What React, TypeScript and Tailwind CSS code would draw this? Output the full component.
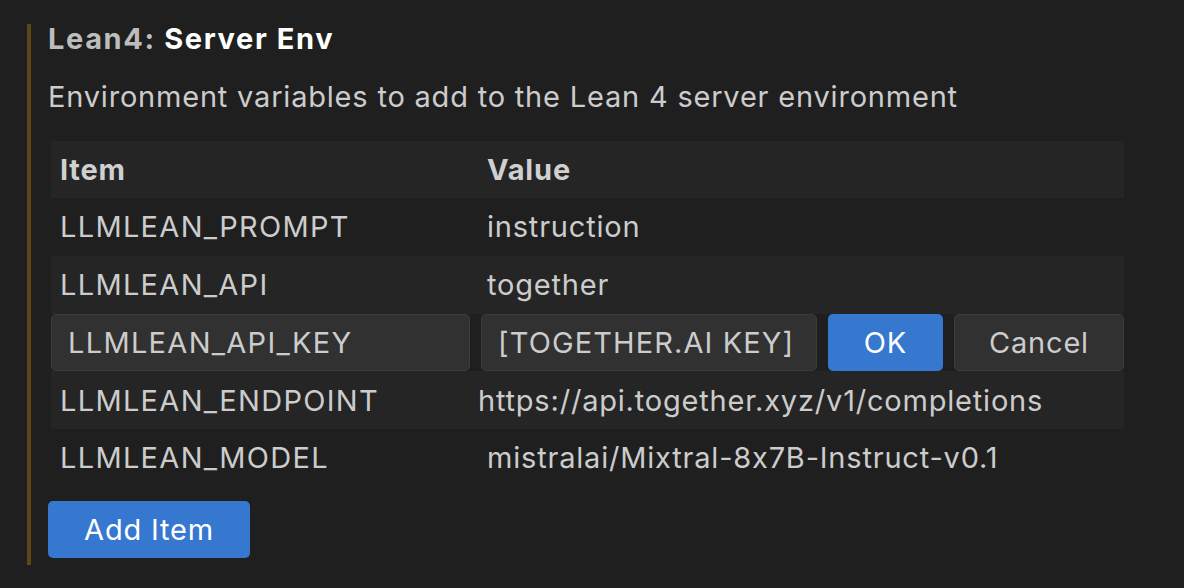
import { useState } from 'react';

type EnvRow = {
  item: string;
  value: string;
  valueShift?: boolean;
};

const ROWS: EnvRow[] = [
  { item: 'LLMLEAN_PROMPT', value: 'instruction' },
  { item: 'LLMLEAN_API', value: 'together' },
  { item: 'LLMLEAN_API_KEY', value: '[TOGETHER.AI KEY]' },
  { item: 'LLMLEAN_ENDPOINT', value: 'https://api.together.xyz/v1/completions', valueShift: true },
  { item: 'LLMLEAN_MODEL', value: 'mistralai/Mixtral-8x7B-Instruct-v0.1' }
];

const EDITING = 2;

function App() {
  const [rows] = useState(ROWS);

  return (
    <div className="min-h-[588px] w-[1184px] bg-[#1f1f1f] pl-[27px] pt-6 font-['Inter',sans-serif] text-[29px] tracking-[0.8px] text-[#cccccc] [font-feature-settings:'calt'_0]">
      <div className="h-[541px] w-[1097px] border-l-4 border-[#5d4719] pl-[17px]">
        <div className="font-bold leading-[29px] tracking-[1.6px]">
          <span className="text-[#bdbdbd]">Lean4: </span>
          <span className="text-white">Server Env</span>
        </div>
        <div className="mt-[29px] leading-[29px]">
          Environment variables to add to the Lean 4 server environment
        </div>

        <div className="ml-[3px] mt-[30px] w-[1073px]">
          <div className="flex h-[57.4px] items-center bg-[#252525] font-bold text-[#d0d0d0]">
            <div className="w-[427px] pl-[9px]">Item</div>
            <div className="flex-1 pl-[9px]">Value</div>
          </div>
          {rows.map((row, i) =>
            i === EDITING ? (
              <div key={row.item} className="flex h-[57.7px] gap-[11px]">
                <input
                  defaultValue={row.item}
                  className="h-full w-[419px] rounded-[5px] border border-[#3c3c3c] bg-[#313131] pl-4 tracking-[1.3px] text-[#cccccc] outline-none"
                />
                <input
                  defaultValue={row.value}
                  className="h-full w-[336px] rounded-[5px] border border-[#3c3c3c] bg-[#313131] pl-4 tracking-[1.1px] text-[#cccccc] outline-none"
                />
                <button className="h-full w-[115px] rounded-[5px] bg-[#3677d0] text-white">OK</button>
                <button className="h-full w-[170px] rounded-[5px] border border-[#3c3c3c] bg-[#313131] text-[#cccccc]">
                  Cancel
                </button>
              </div>
            ) : (
              <div
                key={row.item}
                className={`flex h-[57.7px] items-center ${i % 2 === 1 ? 'bg-[#252525]' : ''}`}
              >
                <div className="w-[427px] pl-[9px] tracking-[1.3px]">{row.item}</div>
                <div className={`flex-1 ${row.valueShift ? 'pl-0' : 'pl-[9px]'}`}>{row.value}</div>
              </div>
            )
          )}
        </div>

        <button className="mt-[14.5px] h-[57px] w-[202px] rounded-[5px] bg-[#3677d0] text-white">
          Add Item
        </button>
      </div>
    </div>
  );
}

export default App;
